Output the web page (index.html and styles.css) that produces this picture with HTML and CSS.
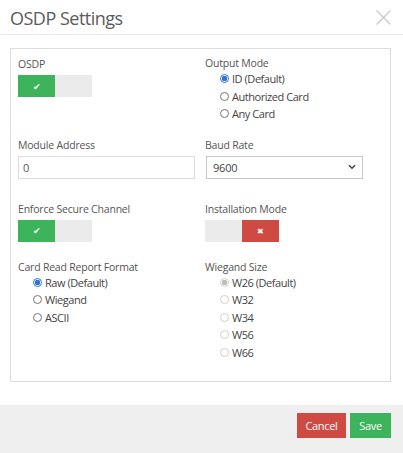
FILE: index.html
```html
<!DOCTYPE html>
<html lang="en">
<head>
    <meta charset="UTF-8">
    <meta name="viewport" content="width=device-width, initial-scale=1.0">
    <title>OSDP Settings</title>
    <link rel="stylesheet" href="styles.css">
</head>
<body>

    <div class="modal">
        <!-- header -->
        <div class="modal-header">
            <h2 class="modal-title">OSDP Settings</h2>
            <svg class="close" width="15" height="15" viewBox="0 0 15 15">
                <path d="M0.5 0.5 L14.5 14.5 M14.5 0.5 L0.5 14.5" stroke="#c6c6c6" stroke-width="1.1" fill="none"/>
            </svg>
        </div>

        <!-- settings -->
        <div class="panel">
            <div class="field">
                <div class="label">OSDP</div>
                <div class="toggle">
                    <span class="half on-yes">&#10004;</span>
                    <span class="half off"></span>
                </div>
            </div>
            <div class="field">
                <div class="label tight">Output Mode</div>
                <div class="radios">
                    <div class="radio"><span class="dot checked"></span>ID (Default)</div>
                    <div class="radio"><span class="dot"></span>Authorized Card</div>
                    <div class="radio"><span class="dot"></span>Any Card</div>
                </div>
            </div>

            <div class="field row2">
                <div class="label">Module Address</div>
                <input type="text" class="text-input" value="0">
            </div>
            <div class="field row2">
                <div class="label">Baud Rate</div>
                <div class="select">
                    <span>9600</span>
                    <svg width="8" height="6" viewBox="0 0 8 6"><path d="M1 1.2 L4 4.2 L7 1.2" stroke="#444" stroke-width="1.6" fill="none"/></svg>
                </div>
            </div>

            <div class="field row3">
                <div class="label">Enforce Secure Channel</div>
                <div class="toggle">
                    <span class="half on-yes">&#10004;</span>
                    <span class="half off"></span>
                </div>
            </div>
            <div class="field row3">
                <div class="label">Installation Mode</div>
                <div class="toggle">
                    <span class="half off"></span>
                    <span class="half on-no">&#10006;</span>
                </div>
            </div>

            <div class="field row4">
                <div class="label tight">Card Read Report Format</div>
                <div class="radios">
                    <div class="radio"><span class="dot checked"></span>Raw (Default)</div>
                    <div class="radio"><span class="dot"></span>Wiegand</div>
                    <div class="radio"><span class="dot"></span>ASCII</div>
                </div>
            </div>
            <div class="field row4">
                <div class="label tight">Wiegand Size</div>
                <div class="radios">
                    <div class="radio"><span class="dot disabled checked"></span>W26 (Default)</div>
                    <div class="radio"><span class="dot disabled"></span>W32</div>
                    <div class="radio"><span class="dot disabled"></span>W34</div>
                    <div class="radio"><span class="dot disabled"></span>W56</div>
                    <div class="radio"><span class="dot disabled"></span>W66</div>
                </div>
            </div>
        </div>

        <!-- footer -->
        <div class="modal-footer">
            <button class="btn btn-cancel">Cancel</button>
            <button class="btn btn-save">Save</button>
        </div>
    </div>

</body>
</html>
```

FILE: styles.css
```css
body { margin: 0; font-family: "Open Sans", "Noto Sans", sans-serif; color: #555; background: #fff; }
.modal { width: 403px; height: 453px; display: flex; flex-direction: column; }

.modal-header { height: 35px; border-bottom: 1px solid #ebebeb; box-sizing: border-box; display: flex; justify-content: space-between; padding: 0 12px 0 10px; }
.modal-title { margin: 0; font-size: 18px; font-weight: 400; line-height: 36px; color: #5a5a5a; letter-spacing: -0.5px; }
.close { margin-top: 10px; }

.panel { margin: 13px 12px 0 10px; height: 334px; box-sizing: border-box; border: 1px solid #dcdcdc; padding: 7px 0 0 7px; display: grid; grid-template-columns: 187px 1fr; align-content: start; }
.field { font-size: 10.5px; letter-spacing: -0.2px; }
.row2 { margin-top: 14px; }
.row3 { margin-top: 22px; }
.row4 { margin-top: 18px; }

.label { line-height: 16px; margin-bottom: 3px; color: #555; }
.label.tight { line-height: 14px; margin-bottom: 0; }

.toggle { display: flex; width: 74px; height: 22px; }
.half { flex: 1; display: flex; align-items: center; justify-content: center; color: #fff; font-size: 9px; }
.on-yes { background: #3db35b; }
.on-no { background: #cf4a43; font-size: 8px; }
.off { background: #ebebeb; }

.radios { padding-left: 15px; }
.radio { display: flex; align-items: center; line-height: 17.5px; font-size: 11px; letter-spacing: -0.45px; color: #444; }
.dot { width: 9px; height: 9px; border: 1px solid #777; border-radius: 50%; margin-right: 3px; box-sizing: border-box; }
.dot.checked { border-color: #2e73d0; background: radial-gradient(circle, #2e73d0 0 2.6px, #fff 3px); }
.dot.disabled { border-color: #d0d0d0; }
.dot.disabled.checked { background: radial-gradient(circle, #bdbdbd 0 2.6px, #fff 3px); }

.text-input { width: 177px; height: 23px; box-sizing: border-box; border: 1px solid #ddd; padding: 0 4px; font: inherit; font-size: 11px; color: #555; display: block; }
.select { width: 157px; height: 23px; box-sizing: border-box; border: 1px solid #c8c8c8; margin-left: 1px; display: flex; align-items: center; justify-content: space-between; padding: 0 6px 0 6px; font-size: 11px; color: #444; }

.modal-footer { margin-top: auto; height: 48px; background: #efefef; display: flex; justify-content: flex-end; align-items: flex-start; padding: 8px 12px 0 0; box-sizing: border-box; gap: 4px; }
.btn { height: 25px; border: none; color: #fff; font-family: inherit; font-size: 11px; letter-spacing: -0.3px; padding: 0; cursor: pointer; }
.btn-cancel { width: 49px; background: #cf4a43; }
.btn-save { width: 41px; background: #3db35b; }
```
